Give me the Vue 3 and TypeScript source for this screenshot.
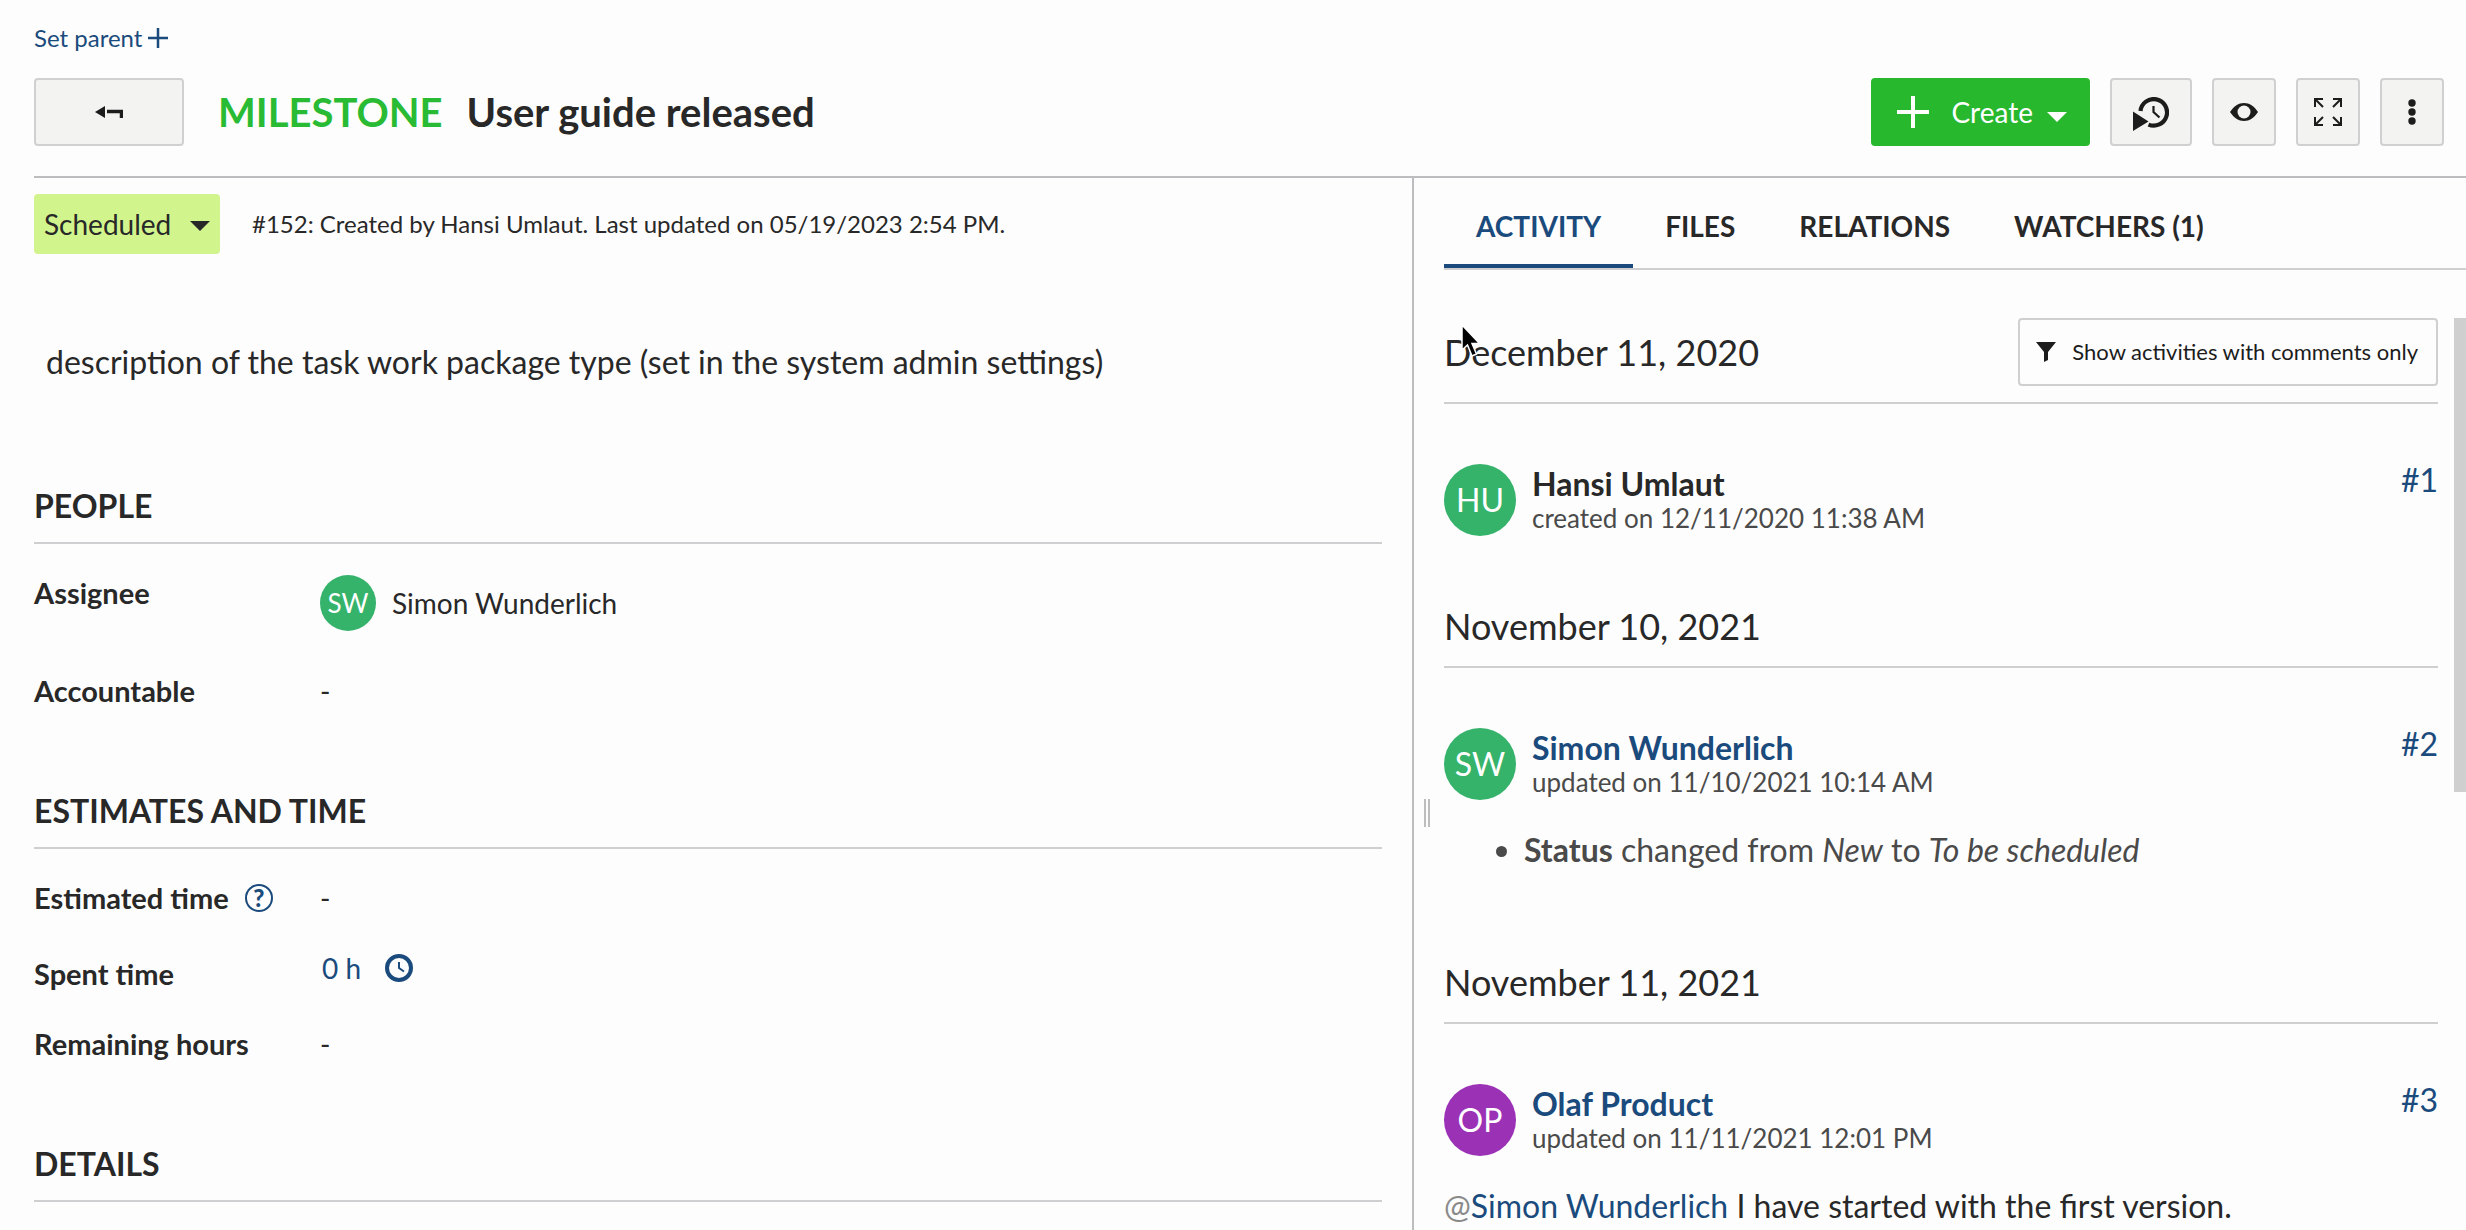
<script setup lang="ts">
interface Tab {
  label: string
  active?: boolean
}

interface Entry {
  id: number
  date: string
  initials: string
  name: string
  linked: boolean
  color: string
  meta: string
}

const tabs: Tab[] = [
  { label: 'ACTIVITY', active: true },
  { label: 'FILES' },
  { label: 'RELATIONS' },
  { label: 'WATCHERS (1)' },
]

const entries: Entry[] = [
  { id: 1, date: 'December 11, 2020', initials: 'HU', name: 'Hansi Umlaut', linked: false, color: '#35b36b', meta: 'created on 12/11/2020 11:38 AM' },
  { id: 2, date: 'November 10, 2021', initials: 'SW', name: 'Simon Wunderlich', linked: true, color: '#35b36b', meta: 'updated on 11/10/2021 10:14 AM' },
  { id: 3, date: 'November 11, 2021', initials: 'OP', name: 'Olaf Product', linked: true, color: '#9b31b5', meta: 'updated on 11/11/2021 12:01 PM' },
]
</script>

<template>
  <div class="page">
    <header class="header">
      <a class="set-parent" href="#">
        Set parent
        <svg width="20" height="20" viewBox="0 0 20 20" aria-hidden="true">
          <path d="M10 0V20M0 10H20" stroke="currentColor" stroke-width="2.500" />
        </svg>
      </a>
      <div class="toolbar">
        <button class="btn back" type="button" aria-label="Back">
          <svg width="28" height="14" viewBox="0 0 28 14" aria-hidden="true">
            <path d="M0 7L10 1V13Z" fill="currentColor" />
            <path d="M12 6.500H26.500V13" fill="none" stroke="currentColor" stroke-width="3.500" />
          </svg>
        </button>
        <h1 class="title"><span class="type">MILESTONE</span><span>User guide released</span></h1>
        <div class="actions">
          <button class="create" type="button">
            <svg width="32" height="32" viewBox="0 0 32 32" aria-hidden="true">
              <path d="M16 0V32M0 16H32" stroke="currentColor" stroke-width="4" />
            </svg>
            <span>Create</span>
            <svg class="create-caret" width="20" height="10" viewBox="0 0 20 10" aria-hidden="true">
              <path d="M0 0H20L10 10Z" fill="currentColor" />
            </svg>
          </button>
          <button class="btn wide" type="button" aria-label="Start timer">
            <svg class="timer" width="36" height="34" viewBox="0 0 36 34" aria-hidden="true">
              <path d="M7.500 14A13.300 13.300 0 1 1 15.500 27.600" fill="none" stroke="currentColor" stroke-width="4.200" />
              <path d="M20.500 9V15L26.500 20.500" fill="none" stroke="currentColor" stroke-width="2.200" />
              <path d="M0 14.500L15.500 24.500L0 34Z" fill="currentColor" />
            </svg>
          </button>
          <button class="btn" type="button" aria-label="Watch work package">
            <svg width="28" height="18" viewBox="0 0 28 18" aria-hidden="true">
              <path d="M0 9C4 3 8.500 0 14 0S24 3 28 9C24 15 19.500 18 14 18S4 15 0 9Z" fill="currentColor" />
              <circle cx="14" cy="9" r="6.500" fill="#f3f3f1" />
            </svg>
          </button>
          <button class="btn" type="button" aria-label="Full screen">
            <svg width="28" height="28" viewBox="0 0 28 28" fill="none" stroke="currentColor" stroke-width="2" aria-hidden="true">
              <path d="M9 1H1V9M1 1L9 9M19 1H27V9M27 1L19 9M1 19V27H9M1 27L9 19M27 19V27H19M27 27L19 19" />
            </svg>
          </button>
          <button class="btn" type="button" aria-label="More actions">
            <svg width="8" height="28" viewBox="0 0 8 28" fill="currentColor" aria-hidden="true">
              <circle cx="4" cy="5" r="3.700" />
              <circle cx="4" cy="14" r="3.700" />
              <circle cx="4" cy="23" r="3.700" />
            </svg>
          </button>
        </div>
      </div>
    </header>

    <div class="split">
      <main class="left">
        <div class="status-row">
          <div class="status">
            <select aria-label="Status">
              <option>Scheduled</option>
            </select>
            <svg class="status-caret" width="20" height="10" viewBox="0 0 20 10" aria-hidden="true">
              <path d="M0 0H20L10 10Z" fill="currentColor" />
            </svg>
          </div>
          <span class="info">#152: Created by Hansi Umlaut. Last updated on 05/19/2023 2:54 PM.</span>
        </div>

        <p class="description">description of the task work package type (set in the system admin settings)</p>

        <section class="group">
          <h2>PEOPLE</h2>
          <dl>
            <div class="row person">
              <dt>Assignee</dt>
              <dd><span class="avatar small">SW</span>Simon Wunderlich</dd>
            </div>
            <div class="row">
              <dt>Accountable</dt>
              <dd>-</dd>
            </div>
          </dl>
        </section>

        <section class="group">
          <h2>ESTIMATES AND TIME</h2>
          <dl>
            <div class="row">
              <dt>
                Estimated time
                <button class="help" type="button" aria-label="Help">?</button>
              </dt>
              <dd>-</dd>
            </div>
            <div class="row spent">
              <dt>Spent time</dt>
              <dd>
                <a href="#">0 h</a>
                <a class="log" href="#" aria-label="Log time">
                  <svg width="28" height="28" viewBox="0 0 28 28" fill="none" stroke="currentColor" aria-hidden="true">
                    <circle cx="14" cy="14" r="12" stroke-width="4" />
                    <path d="M14 8V14L19 17.500" stroke-width="2" />
                  </svg>
                </a>
              </dd>
            </div>
            <div class="row">
              <dt>Remaining hours</dt>
              <dd>-</dd>
            </div>
          </dl>
        </section>

        <section class="group">
          <h2>DETAILS</h2>
        </section>
      </main>

      <aside class="right">
        <div class="handle" aria-hidden="true"></div>
        <nav class="tabs">
          <a v-for="tab in tabs" :key="tab.label" href="#" class="tab" :class="{ active: tab.active }">{{ tab.label }}</a>
        </nav>
        <div class="feed">
          <section v-for="entry in entries" :key="entry.id" class="day">
            <div class="day-head">
              <h3>{{ entry.date }}</h3>
              <button v-if="entry.id === 1" class="filter" type="button">
                <svg width="20" height="20" viewBox="0 0 20 20" aria-hidden="true">
                  <path d="M0 0H20L12 10V18L8 20V10Z" fill="currentColor" />
                </svg>
                Show activities with comments only
              </button>
            </div>
            <article class="entry">
              <span class="avatar" :style="{ backgroundColor: entry.color }">{{ entry.initials }}</span>
              <div class="who">
                <a v-if="entry.linked" class="name" href="#">{{ entry.name }}</a>
                <span v-else class="name">{{ entry.name }}</span>
                <span class="meta">{{ entry.meta }}</span>
              </div>
              <a class="number" href="#">#{{ entry.id }}</a>
            </article>
            <ul v-if="entry.id === 2" class="changes">
              <li><strong>Status</strong> changed from <em>New</em> to <em>To be scheduled</em></li>
            </ul>
            <p v-if="entry.id === 3" class="comment"><span class="at">@</span><a href="#">Simon Wunderlich</a> I have started with the first version.</p>
          </section>
          <div class="scrollbar" aria-hidden="true"></div>
          <svg class="cursor" width="20" height="34" viewBox="0 0 20 34" aria-hidden="true">
            <path d="M1 1V26L6.500 21L11 32L15.500 30L11 19.500H18.500Z" fill="#000" stroke="#fff" stroke-width="1.500" />
          </svg>
        </div>
      </aside>
    </div>
  </div>
</template>

<style>
body {
  margin: 0;
  background: #fdfdfd;
}
</style>

<style scoped>
.page {
  display: flex;
  flex-direction: column;
  height: 100vh;
  overflow: hidden;
  color: #282828;
  font-family: Lato, 'Liberation Sans', sans-serif;
  font-size: 28px;
  line-height: 36px;
}

h1,
h2,
h3,
p,
dl,
dd,
ul {
  margin: 0;
  padding: 0;
}

a {
  color: #1a4b7c;
  text-decoration: none;
}

button,
select {
  margin: 0;
  padding: 0;
  font: inherit;
  color: inherit;
}

svg {
  display: block;
  flex: none;
}

.header {
  margin-left: 34px;
  padding: 22px 22px 30px 0;
  border-bottom: 2px solid #bdbdc0;
}

.set-parent {
  display: flex;
  align-items: center;
  gap: 6px;
  width: fit-content;
  height: 32px;
  font-size: 24px;
  line-height: 32px;
}

.toolbar {
  display: flex;
  align-items: center;
  height: 68px;
  margin-top: 24px;
}

.btn {
  display: flex;
  align-items: center;
  justify-content: center;
  box-sizing: border-box;
  width: 64px;
  height: 68px;
  border: 2px solid #d0d0d0;
  border-radius: 4px;
  background: #f3f3f1;
  color: #1c1c1c;
}

.btn.back {
  width: 150px;
}

.btn.wide {
  width: 82px;
}

.timer {
  margin-top: 4px;
}

.title {
  display: flex;
  gap: 24px;
  margin-left: 34px;
  font-size: 40px;
  line-height: 48px;
  font-weight: 700;
}

.type {
  color: #2abb34;
}

.actions {
  display: flex;
  gap: 20px;
  margin-left: auto;
}

.create {
  display: flex;
  align-items: center;
  box-sizing: border-box;
  height: 68px;
  padding: 0 23px 0 26px;
  border: 0;
  border-radius: 4px;
  background: #27b82d;
  color: #fff;
}

.create span {
  margin: 0 14px 0 22px;
}

.create-caret {
  margin-top: 10px;
}

.split {
  display: grid;
  grid-template-columns: 1412fr 1054fr;
  flex: 1;
  min-height: 0;
}

.left {
  min-width: 0;
  padding: 16px 30px 0 34px;
  overflow: hidden;
}

.status-row {
  display: flex;
  align-items: center;
  gap: 32px;
}

.status {
  position: relative;
}

.status select {
  appearance: none;
  display: block;
  box-sizing: border-box;
  height: 60px;
  padding: 0 48px 0 10px;
  border: 0;
  border-radius: 4px;
  background: #d1f48d;
}

.status-caret {
  position: absolute;
  top: 27px;
  right: 10px;
  pointer-events: none;
}

.info {
  font-size: 24px;
}

.description {
  margin: 84px 0 100px 12px;
  font-size: 32px;
  line-height: 48px;
}

.group h2 {
  padding-bottom: 16px;
  border-bottom: 2px solid #cfcfd2;
  font-size: 32px;
  line-height: 40px;
  font-weight: 700;
}

.group dl {
  display: flex;
  flex-direction: column;
  gap: 34px;
  margin: 31px 0 82px;
}

.row {
  display: flex;
}

.person {
  padding-bottom: 8px;
}

.row dt {
  display: flex;
  align-items: center;
  align-self: flex-start;
  gap: 16px;
  width: 286px;
  font-size: 29px;
  font-weight: 700;
}

.row dd {
  display: flex;
  align-items: center;
}

.spent dt {
  padding-top: 6px;
}

.spent dd {
  align-self: flex-start;
  gap: 24px;
  padding-left: 2px;
}

.help {
  box-sizing: border-box;
  width: 28px;
  height: 28px;
  border: 2px solid #1a4b7c;
  border-radius: 50%;
  background: none;
  color: #1a4b7c;
  font-size: 24px;
  line-height: 24px;
  font-weight: 900;
}

.avatar {
  display: flex;
  align-items: center;
  justify-content: center;
  flex: none;
  width: 72px;
  height: 72px;
  border-radius: 50%;
  background: #35b36b;
  color: #fff;
  font-size: 32px;
}

.avatar.small {
  width: 56px;
  height: 56px;
  margin-right: 16px;
  font-size: 26px;
}

.right {
  position: relative;
  min-width: 0;
  padding-left: 30px;
  border-left: 2px solid #bdbdc0;
  overflow: hidden;
}

.handle {
  position: absolute;
  top: 59%;
  left: 10px;
  width: 2px;
  height: 28px;
  border: solid #bdbdbd;
  border-width: 0 2px;
}

.tabs {
  display: flex;
  border-bottom: 2px solid #cfcfd2;
}

.tab {
  padding: 30px 32px 20px;
  border-bottom: 4px solid transparent;
  color: #282828;
  font-weight: 700;
}

.tab.active {
  border-color: #1a4b7c;
  color: #1a4b7c;
}

.feed {
  position: relative;
  margin-top: 48px;
  padding-right: 28px;
}

.day {
  margin-bottom: 66px;
}

.day-head {
  display: flex;
  align-items: center;
  justify-content: space-between;
  padding-bottom: 16px;
  border-bottom: 2px solid #cfcfcf;
}

.day-head h3 {
  font-size: 36px;
  line-height: 48px;
  font-weight: 400;
}

.filter {
  display: flex;
  align-items: center;
  gap: 16px;
  box-sizing: border-box;
  height: 68px;
  padding: 0 18px 0 16px;
  border: 2px solid #cfcfcf;
  border-radius: 4px;
  background: #fdfdfd;
  color: #1c1c1c;
  font-size: 22px;
}

.entry {
  display: flex;
  align-items: flex-start;
  margin-top: 60px;
}

.who {
  display: flex;
  flex: 1;
  flex-direction: column;
  align-items: flex-start;
  margin-left: 16px;
  padding-top: 2px;
}

.name {
  font-size: 32px;
  font-weight: 700;
}

.meta {
  color: #4a4a4a;
  font-size: 26px;
  line-height: 32px;
}

.number {
  font-size: 32px;
  line-height: 32px;
}

.changes {
  margin-top: 26px;
  padding: 0 0 18px 80px;
  color: #4a4a4a;
  font-size: 32px;
  line-height: 48px;
}

.comment {
  margin-top: 26px;
  font-size: 32px;
  line-height: 48px;
}

.at {
  color: #8a8a8a;
}

.scrollbar {
  position: absolute;
  top: 0;
  right: 0;
  width: 12px;
  height: 474px;
  background: #cfcfcf;
}

.cursor {
  position: absolute;
  top: 6px;
  left: 17px;
}
</style>
